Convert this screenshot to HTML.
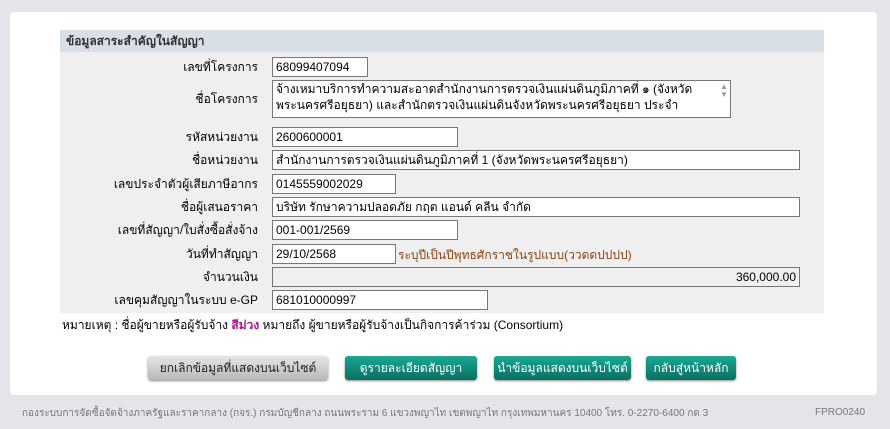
<!DOCTYPE html>
<html><head><meta charset="utf-8"><style>
body{margin:0;width:890px;height:429px;background:#e4e5e8;font-family:Tahoma,"Liberation Sans",sans-serif;font-size:12px;color:#000;position:relative;overflow:hidden}
.panel{position:absolute;left:10px;top:12px;width:867px;height:383px;background:#fff;border-radius:4px}
.hdr{position:absolute;left:60px;top:30px;width:764px;height:22px;background:#d9dfe7;font-weight:bold;color:#333;line-height:22px;padding-left:6px;box-sizing:border-box;font-size:12px}
.rows{position:absolute;left:60px;top:52px;width:764px;height:261px;background:#efefef}
.lbl{position:absolute;right:632px;text-align:right;white-space:nowrap}
.inp{position:absolute;left:272px;border:1px solid #777;background:#fff;box-sizing:border-box;padding:1px 3px;white-space:nowrap;overflow:hidden;line-height:16px}
.btn{position:absolute;top:356px;height:24px;border-radius:3px;color:#fff;text-align:center;line-height:24px;font-size:12px;box-shadow:0 1px 2px #888}
.g{background:linear-gradient(#1aa894,#0b6f61);color:#fff}
.foot{position:absolute;top:406px;left:22px;font-size:10px;color:#777}
</style></head><body>
<div class="panel"></div>
<div class="hdr">ข้อมูลสาระสำคัญในสัญญา</div>
<div class="rows"></div>
<div class="lbl" style="top:58px;left:0;width:258px">เลขที่โครงการ</div>
<div class="inp" style="top:57px;width:96px;height:20px">68099407094</div>
<div class="lbl" style="top:90px;left:0;width:258px">ชื่อโครงการ</div>
<div class="inp" style="top:80px;width:459px;height:38px;white-space:normal;padding-top:0;padding-right:26px">จ้างเหมาบริการทำความสะอาดสำนักงานการตรวจเงินแผ่นดินภูมิภาคที่ ๑ (จังหวัดพระนครศรีอยุธยา) และสำนักตรวจเงินแผ่นดินจังหวัดพระนครศรีอยุธยา ประจำ<span style="position:absolute;right:2px;top:2px;color:#999;font-size:8px;line-height:8px">▲<br>▼</span></div>
<div class="lbl" style="top:128px;left:0;width:258px">รหัสหน่วยงาน</div>
<div class="inp" style="top:127px;width:186px;height:20px">2600600001</div>
<div class="lbl" style="top:151px;left:0;width:258px">ชื่อหน่วยงาน</div>
<div class="inp" style="top:150px;width:528px;height:20px">สำนักงานการตรวจเงินแผ่นดินภูมิภาคที่ 1 (จังหวัดพระนครศรีอยุธยา)</div>
<div class="lbl" style="top:175px;left:0;width:258px">เลขประจำตัวผู้เสียภาษีอากร</div>
<div class="inp" style="top:174px;width:124px;height:20px">0145559002029</div>
<div class="lbl" style="top:198px;left:0;width:258px">ชื่อผู้เสนอราคา</div>
<div class="inp" style="top:197px;width:528px;height:20px">บริษัท รักษาความปลอดภัย กฤต แอนด์ คลีน จำกัด</div>
<div class="lbl" style="top:221px;left:0;width:258px">เลขที่สัญญา/ใบสั่งซื้อสั่งจ้าง</div>
<div class="inp" style="top:220px;width:186px;height:20px">001-001/2569</div>
<div class="lbl" style="top:245px;left:0;width:258px">วันที่ทำสัญญา</div>
<div class="inp" style="top:244px;width:124px;height:20px">29/10/2568</div>
<div style="position:absolute;left:398px;top:246px;color:#8b4513">ระบุปีเป็นปีพุทธศักราชในรูปแบบ(ววดดปปปป)</div>
<div class="lbl" style="top:268px;left:0;width:258px">จำนวนเงิน</div>
<div class="inp" style="top:267px;width:528px;height:20px;background:#efefef;text-align:right">360,000.00</div>
<div class="lbl" style="top:291px;left:0;width:258px">เลขคุมสัญญาในระบบ e-GP</div>
<div class="inp" style="top:290px;width:216px;height:20px">681010000997</div>
<div style="position:absolute;left:62px;top:316px">หมายเหตุ : ชื่อผู้ขายหรือผู้รับจ้าง <b style="color:#b0158f">สีม่วง</b> หมายถึง ผู้ขายหรือผู้รับจ้างเป็นกิจการค้าร่วม (Consortium)</div>
<div class="btn" style="left:148px;width:180px;background:linear-gradient(#e6e6e6,#b8b8b8);color:#222">ยกเลิกข้อมูลที่แสดงบนเว็บไซต์</div>
<div class="btn g" style="left:345px;width:132px">ดูรายละเอียดสัญญา</div>
<div class="btn g" style="left:494px;width:137px">นำข้อมูลแสดงบนเว็บไซต์</div>
<div class="btn g" style="left:646px;width:90px">กลับสู่หน้าหลัก</div>
<div class="foot">กองระบบการจัดซื้อจัดจ้างภาครัฐและราคากลาง (กจร.) กรมบัญชีกลาง ถนนพระราม 6 แขวงพญาไท เขตพญาไท กรุงเทพมหานคร 10400 โทร. 0-2270-6400 กด 3</div>
<div class="foot" style="left:815px;top:407px">FPRO0240</div>
</body></html>
